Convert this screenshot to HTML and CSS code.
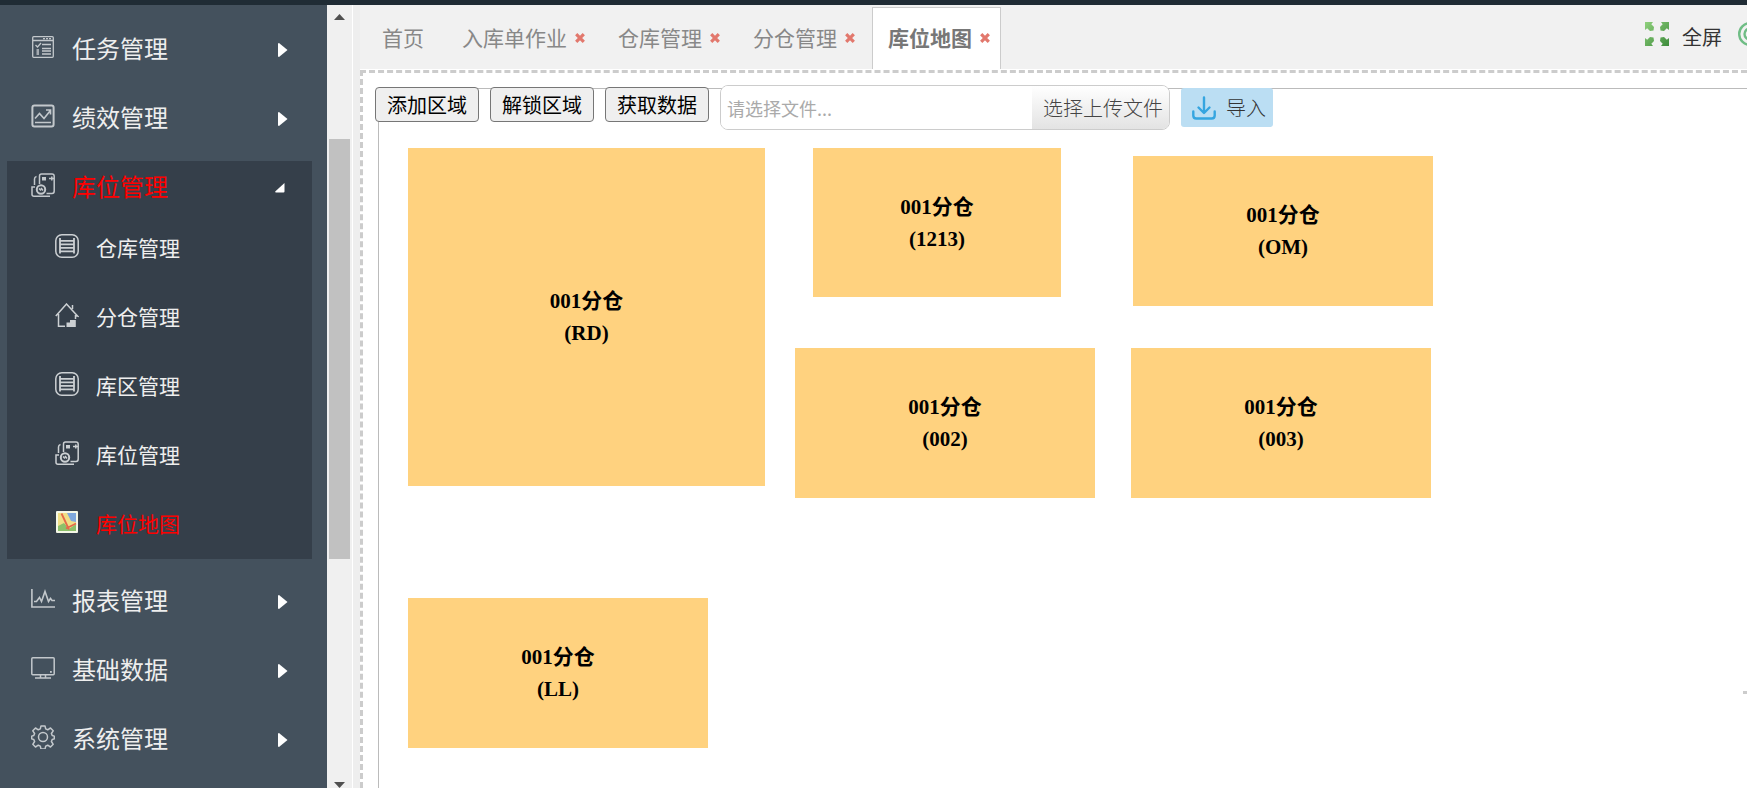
FILE: index.html
```html
<!DOCTYPE html>
<html lang="zh-CN">
<head>
<meta charset="utf-8">
<title>库位地图</title>
<link rel="stylesheet" href="styles.css">
</head>
<body>
<svg class="defs" aria-hidden="true">
  <symbol id="i-task" viewBox="0 0 24 24"><g fill="none" stroke="currentColor" stroke-width="1.3"><rect x="1.7" y="1.7" width="20.6" height="20.6" rx="1"/><path d="M2 5.5h20M12 3.6h2M15 3.6h2M18 3.6h2M4.500 10l2 2 3.500-4M11 9.500h9M11 13.500h9M11 16h9M11 19h9M5.500 15h2.500M5.500 17h2.500M5.500 19h2.500"/></g></symbol>
  <symbol id="i-perf" viewBox="0 0 24 24"><g fill="none" stroke="currentColor"><rect x="1.400" y="1.400" width="21.200" height="21.200" rx="2" stroke-width="2"/><path stroke-width="1.600" d="M4 14.500l4.500-5 4.500 5 6-7.500M15 6h4.500v4.500M4 18.500h16"/></g></symbol>
  <symbol id="i-loc" viewBox="0 0 24 24"><g fill="none" stroke="currentColor" stroke-width="1.500"><path d="M8.500 11V3q0-2 2-2H21q2.200 0 2.200 2.200V18q0 2.500-2.200 2.500h-5.500M5.500 3.500q-2 .5-2 2.500v6M4 14H1v7.500q0 1.700 2 1.700h16"/><circle cx="10" cy="16.500" r="4.200" stroke-width="2"/><path d="M8 15.500l2 2M10 15l2 2.500M18 5.500h5M20.800 3.500v4"/></g><rect x="11" y="4" width="4" height="3.500" fill="currentColor"/></symbol>
  <symbol id="i-store" viewBox="0 0 24 24"><g fill="none" stroke="currentColor"><rect x=".8" y=".8" width="22.400" height="22.400" rx="6" stroke-width="1.500"/><path stroke-width="1.800" d="M5 4v15.500M19 4v15.500M5 6.800h14M5 10.300h14M5 13.800h14M5 17.300h14"/></g></symbol>
  <symbol id="i-home" viewBox="0 0 24 24"><g fill="none" stroke="currentColor" stroke-width="1.500"><path d="M.8 13L11.500 1l11 12-2-.5M3.500 11v12.300H10M20.500 12v4M17.500 6V2"/></g><path fill="currentColor" d="M11.500 19.500H15V17h5.800v7h-9.300z"/></symbol>
  <symbol id="i-map" viewBox="0 0 24 24"><rect x="1" y="1" width="22" height="22" rx="1" fill="#f4f7e6"/><path fill="#f0df86" d="M3 3h18v18H3z"/><path fill="#7fa8dc" d="M12 3h9v9l-5-1z"/><path fill="#8cc06a" d="M3 16l6-3 5 6 7-5v7H3z"/><path d="M6.500 3.500L14 19.500M11 18.500l10-5" fill="none" stroke="#e5694a" stroke-width="1.800"/></symbol>
  <symbol id="i-report" viewBox="0 0 24 24"><g fill="none" stroke="currentColor"><path stroke-width="1.600" d="M.9 2v18H24"/><path stroke-width="1.600" d="M3 14.500h2.500l3-4 2 4L14 4.500l3.500 10 2-3 1.500 2H24"/></g></symbol>
  <symbol id="i-screen" viewBox="0 0 24 24"><g fill="none" stroke="currentColor" stroke-width="1.500"><rect x=".8" y="1.800" width="22.400" height="17" rx="1"/><path d="M9.500 19v2.500M14.500 19v2.500M4 22h16"/></g><rect x="19" y="15" width="1.800" height="1.800" fill="currentColor"/></symbol>
  <symbol id="i-gear" viewBox="0 0 24 24"><g fill="none" stroke="currentColor" stroke-width="1.500" stroke-linejoin="round"><path d="M10 .9h4l.7 3 2 .9 2.800-1.800 2.700 2.800-1.800 2.700.8 2 2.100.6v2.800l-2.100.6-.8 2 1.800 2.800-2.700 2.700-2.800-1.800-2 .9-.7 3h-4l-.7-3-2-.9L4.500 22l-2.700-2.700 1.800-2.800-.8-2-2.100-.6v-2.800l2.100-.6.8-2-1.800-2.700L4.500 3l2.800 1.800 2-.9z"/><circle cx="12" cy="12" r="4.500"/></g></symbol>
  <symbol id="i-right" viewBox="0 0 10 14"><path fill="#fff" d="M1 0l8.500 7L1 14q-1 0-1-1V1q0-1 1-1z"/></symbol>
  <symbol id="i-open" viewBox="0 0 10 10"><path fill="#fff" d="M9.500 0v8.500q0 1-1 1H1q-1 0-.8-1z"/></symbol>
  <symbol id="i-close" viewBox="0 0 10 10"><path d="M1.200 1.200l7.600 7.600M8.800 1.200L1.200 8.800" stroke="#e2786d" stroke-width="3.200"/></symbol>
</svg>

<header class="topline"></header>
<div class="shell">
  <nav class="sidebar" aria-label="主菜单">
    <a class="item" href="#"><svg class="ico"><use href="#i-task"/></svg><span>任务管理</span><svg class="caret"><use href="#i-right"/></svg></a>
    <a class="item" href="#"><svg class="ico"><use href="#i-perf"/></svg><span>绩效管理</span><svg class="caret"><use href="#i-right"/></svg></a>
    <div class="group">
      <a class="item active" href="#"><svg class="ico"><use href="#i-loc"/></svg><span>库位管理</span><svg class="caret open"><use href="#i-open"/></svg></a>
      <a class="sub" href="#"><svg class="ico"><use href="#i-store"/></svg><span>仓库管理</span></a>
      <a class="sub" href="#"><svg class="ico"><use href="#i-home"/></svg><span>分仓管理</span></a>
      <a class="sub" href="#"><svg class="ico"><use href="#i-store"/></svg><span>库区管理</span></a>
      <a class="sub" href="#"><svg class="ico"><use href="#i-loc"/></svg><span>库位管理</span></a>
      <a class="sub active" href="#"><svg class="ico"><use href="#i-map"/></svg><span>库位地图</span></a>
    </div>
    <a class="item" href="#"><svg class="ico"><use href="#i-report"/></svg><span>报表管理</span><svg class="caret"><use href="#i-right"/></svg></a>
    <a class="item" href="#"><svg class="ico"><use href="#i-screen"/></svg><span>基础数据</span><svg class="caret"><use href="#i-right"/></svg></a>
    <a class="item" href="#"><svg class="ico"><use href="#i-gear"/></svg><span>系统管理</span><svg class="caret"><use href="#i-right"/></svg></a>
  </nav>
  <div class="scrollbar" aria-hidden="true">
    <svg class="arrow" viewBox="0 0 11 6"><path fill="#505050" d="M5.500 0L11 6H0z"/></svg>
    <div class="track"><div class="thumb"></div></div>
    <svg class="arrow" viewBox="0 0 11 6"><path fill="#505050" d="M5.500 6L11 0H0z"/></svg>
  </div>
  <main class="main">
    <div class="tabbar">
      <div class="tabs">
        <div class="tab"><a href="#">首页</a></div>
        <div class="tab"><a href="#">入库单作业</a><button class="close" aria-label="关闭入库单作业"><svg><use href="#i-close"/></svg></button></div>
        <div class="tab"><a href="#">仓库管理</a><button class="close" aria-label="关闭仓库管理"><svg><use href="#i-close"/></svg></button></div>
        <div class="tab"><a href="#">分仓管理</a><button class="close" aria-label="关闭分仓管理"><svg><use href="#i-close"/></svg></button></div>
        <div class="tab current"><a href="#">库位地图</a><button class="close" aria-label="关闭库位地图"><svg><use href="#i-close"/></svg></button></div>
      </div>
      <div class="tools">
        <button class="tool">
          <svg class="ico" viewBox="0 0 24 24">
            <defs><linearGradient id="gr" x1="0" y1="0" x2="1" y2="1"><stop offset="0" stop-color="#8fd07c"/><stop offset="1" stop-color="#3d8b3b"/></linearGradient></defs>
            <path fill="url(#gr)" d="M0 0h8L6.300 2.200 9 5 8.500 8.500 5 9 2.200 6.300 0 8zM24 0v8l-2.200-1.700L19 9l-3.500-.5L15 5l2.700-2.800L16 0zM0 24v-8l2.200 1.700L5 15l3.500.5L9 19l-2.700 2.800L8 24zM24 24h-8l1.700-2.200L15 19l.5-3.500L19 15l2.800 2.700L24 16z"/>
          </svg>
          <span>全屏</span>
        </button>
        <button class="tool more" aria-label="更多">
          <svg class="ico" viewBox="0 0 24 24"><g fill="none" stroke="#6fbd85" stroke-width="2.400"><circle cx="12" cy="12" r="10.800"/><circle cx="12" cy="12" r="5.500"/></g></svg>
        </button>
      </div>
    </div>
    <section class="work">
      <div class="map">
        <div class="zone z-rd">001分仓<br>(RD)</div>
        <div class="zone z-1213">001分仓<br>(1213)</div>
        <div class="zone z-om">001分仓<br>(OM)</div>
        <div class="zone z-002">001分仓<br>(002)</div>
        <div class="zone z-003">001分仓<br>(003)</div>
        <div class="zone z-ll">001分仓<br>(LL)</div>
        <div class="handle"></div>
      </div>
      <div class="toolbar">
        <div class="actions">
          <button class="plain">添加区域</button>
          <button class="plain">解锁区域</button>
          <button class="plain">获取数据</button>
        </div>
        <div class="filebox">
          <input type="text" placeholder="请选择文件..." aria-label="文件" readonly>
          <button class="pick">选择上传文件</button>
        </div>
        <button class="import">
          <svg class="ico" viewBox="0 0 24 24"><g fill="none" stroke="#35a5e0" stroke-width="2.400" stroke-linecap="round" stroke-linejoin="round"><path d="M12 1.500v15M6.500 11.500l5.500 5.500 5.500-5.500M1.300 15.500v4q0 3 3 3h15.400q3 0 3-3v-4"/></g></svg>
          <span>导入</span>
        </button>
      </div>
    </section>
  </main>
</div>
</body>
</html>
```
FILE: styles.css
```css
* { box-sizing: border-box; }

body {
  margin: 0;
  height: 100vh;
  display: flex;
  flex-direction: column;
  overflow: hidden;
  background: #fff;
  font-family: "Noto Sans CJK SC", sans-serif;
}

button {
  margin: 0;
  padding: 0;
  border: 0;
  background: none;
  font-family: inherit;
}

a { color: inherit; text-decoration: none; }

.defs { display: none; }

.ico { width: 24px; height: 24px; flex: none; }

.topline { flex: none; height: 5px; background: #202c35; }

.shell { flex: 1; display: flex; min-height: 0; }

/* Sidebar */
.sidebar {
  flex: none;
  width: 327px;
  padding: 18px 15px 0 7px;
  display: flex;
  flex-direction: column;
  gap: 16px;
  overflow: hidden;
  background: #44515d;
  color: #eee;
}

.item {
  flex: none;
  display: flex;
  align-items: center;
  height: 53px;
  padding: 0 24px;
  font-size: 24px;
}

.item .ico { margin-right: 17px; color: #c3c8cc; }

.item .ico, .sub .ico { margin-bottom: 5px; }

.item span, .sub span { margin-bottom: 4px; }

.caret { width: 10px; height: 14px; margin-left: auto; }
.caret.open { height: 10px; margin-right: 3px; }

.group { flex: none; background: #353f4a; }

.sub {
  display: flex;
  align-items: center;
  gap: 17px;
  height: 69px;
  padding-left: 48px;
  font-size: 21px;
}

.sub .ico { color: #ccd0d3; }

.item.active, .sub.active { color: #f00; }

/* Sidebar scrollbar */
.scrollbar {
  flex: none;
  width: 26px;
  padding-top: 9px;
  display: flex;
  flex-direction: column;
  align-items: center;
  background: #f0f0f0;
  border-right: 1px solid #fff;
}

.arrow { width: 11px; height: 6px; flex: none; }

.track { flex: 1; align-self: stretch; padding: 119px 2px 0; }

.thumb { height: 420px; background: #c1c1c1; }

/* Tabs */
.main {
  flex: 1;
  min-width: 0;
  display: flex;
  flex-direction: column;
  padding-left: 7px;
  background: #eee;
}

.tabbar {
  flex: none;
  display: flex;
  justify-content: space-between;
  height: 65px;
  background: #f1f1f1;
  border-bottom: 1px solid #fff;
}

.tabs { display: flex; gap: 6px; padding: 2px 0 0 6px; }

.tab {
  display: flex;
  align-items: center;
  gap: 8px;
  padding: 0 10px 0 15px;
  border: 1px solid transparent;
  border-bottom: 0;
  color: #888;
  font-size: 21px;
}

.tab:first-child { padding-right: 15px; }

.tab a { margin-bottom: 4px; }

.tab.current {
  background: #fff;
  border-color: #ccc;
  color: #777;
  font-weight: bold;
}

.close { display: flex; margin-bottom: 2px; }
.close svg { width: 10px; height: 10px; }

.tools { display: flex; gap: 16px; align-items: center; padding-bottom: 2px; }

.tool {
  display: flex;
  align-items: center;
  gap: 13px;
  color: #333;
  font-size: 20px;
}

.tool .ico { margin-bottom: 5px; }

.more { width: 9px; overflow: hidden; }

/* Work area */
.work {
  flex: 1;
  display: grid;
  min-height: 0;
  background: #fff;
  border-top: 3px dashed #ccc;
  border-left: 3px dashed #ccc;
}

.map, .toolbar { grid-area: 1 / 1; }

.map {
  position: relative;
  margin: 15px 0 0 15px;
  border-top: 1px solid #bbb;
  border-left: 1px solid #bbb;
}

.toolbar {
  z-index: 1;
  align-self: start;
  display: flex;
  align-items: center;
  gap: 11px;
  padding: 12px 12px 0;
}

.actions { display: flex; gap: 11px; margin-bottom: 6px; }

.plain {
  height: 35px;
  padding: 0 11px;
  border: 1px solid #767676;
  border-radius: 4px;
  background: #efefef;
  color: #000;
  font-size: 20px;
  line-height: 32px;
}

.filebox {
  display: flex;
  width: 450px;
  height: 45px;
  border: 1px solid #ccc;
  border-radius: 8px;
  overflow: hidden;
  background: #fff;
}

.filebox input {
  flex: 1;
  min-width: 0;
  padding: 0 6px;
  border: 0;
  outline: 0;
  font-family: inherit;
  font-size: 18px;
}

.filebox input::placeholder { color: #aaa; }

.pick {
  width: 137px;
  padding-right: 6px;
  background: linear-gradient(#fff, #e3e3e3);
  color: #444;
  font-size: 20px;
  font-weight: 300;
  text-align: right;
}

.import {
  display: flex;
  align-items: center;
  gap: 10px;
  height: 39px;
  padding: 0 7px 0 11px;
  border-radius: 3px;
  background: #bbdef3;
  color: #333;
  font-size: 20px;
  font-weight: 300;
}

/* Warehouse zones placed freely on the map */
.zone {
  position: absolute;
  display: grid;
  align-content: center;
  width: 300px;
  height: 150px;
  background: #ffd27f;
  color: #000;
  font: bold 21px/32px "Liberation Serif", "Noto Sans CJK SC", serif;
  text-align: center;
}

.z-rd { left: 29px; top: 59px; width: 357px; height: 338px; }
.z-1213 { left: 434px; top: 59px; width: 248px; height: 149px; }
.z-om { left: 754px; top: 67px; }
.z-002 { left: 416px; top: 259px; }
.z-003 { left: 752px; top: 259px; }
.z-ll { left: 29px; top: 509px; }

.handle {
  position: absolute;
  right: 0;
  top: 602px;
  width: 4px;
  height: 3px;
  background: #ccc;
}
```
